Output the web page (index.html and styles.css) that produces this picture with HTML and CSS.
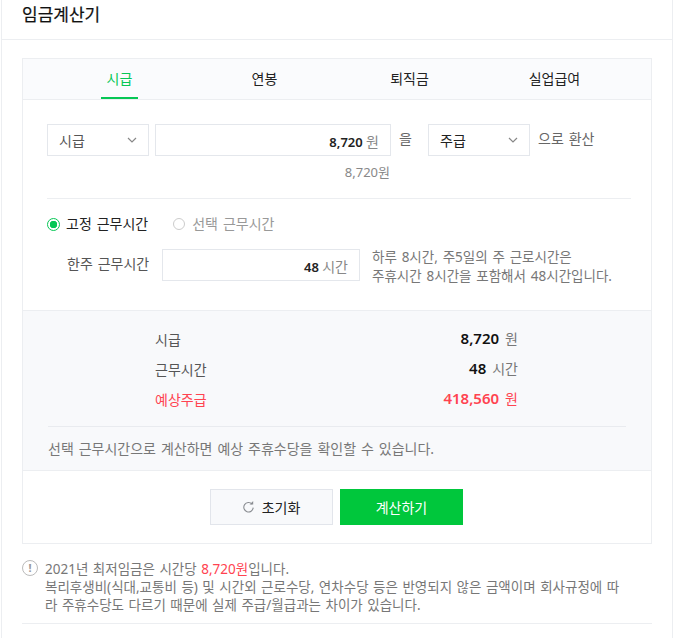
FILE: index.html
```html
<!DOCTYPE html>
<html lang="ko">
<head>
    <meta charset="UTF-8">
    <meta name="viewport" content="width=device-width, initial-scale=1.0">
    <title>임금계산기</title>
    <link rel="stylesheet" href="styles.css">
</head>
<body>
    <div class="wrap">
        <h1 class="title">임금계산기</h1>
        <div class="content">
            <div class="calc">
                <ul class="tabs">
                    <li class="tab on"><span>시급</span></li>
                    <li class="tab"><span>연봉</span></li>
                    <li class="tab"><span>퇴직금</span></li>
                    <li class="tab"><span>실업급여</span></li>
                </ul>

                <div class="form">
                    <div class="convert">
                        <div class="select">
                            <span>시급</span>
                            <svg class="arrow" width="10" height="6" viewBox="0 0 10 6"><path d="M1 1l4 4 4-4" fill="none" stroke="#888" stroke-width="1.2"/></svg>
                        </div>
                        <div class="input wide"><b>8,720</b> <span class="unit">원</span></div>
                        <span class="word eul">을</span>
                        <div class="select dark">
                            <span>주급</span>
                            <svg class="arrow" width="10" height="6" viewBox="0 0 10 6"><path d="M1 1l4 4 4-4" fill="none" stroke="#888" stroke-width="1.2"/></svg>
                        </div>
                        <span class="word">으로 환산</span>
                    </div>
                    <p class="korean">8,720원</p>

                    <div class="radios">
                        <label class="radio on"><i></i>고정 근무시간</label>
                        <label class="radio"><i></i>선택 근무시간</label>
                    </div>
                    <div class="hours">
                        <span class="hours-label">한주 근무시간</span>
                        <div class="input short"><b>48</b> <span class="unit">시간</span></div>
                        <p class="hours-note">하루 8시간, 주5일의 주 근로시간은<br>주휴시간 8시간을 포함해서 48시간입니다.</p>
                    </div>
                </div>

                <div class="result">
                    <dl class="result-row">
                        <dt>시급</dt>
                        <dd><b>8,720</b><span>원</span></dd>
                    </dl>
                    <dl class="result-row">
                        <dt>근무시간</dt>
                        <dd><b>48</b><span>시간</span></dd>
                    </dl>
                    <dl class="result-row total">
                        <dt>예상주급</dt>
                        <dd><b>418,560</b><span>원</span></dd>
                    </dl>
                    <p class="result-note">선택 근무시간으로 계산하면 예상 주휴수당을 확인할 수 있습니다.</p>
                </div>

                <div class="buttons">
                    <button class="btn reset">
                        <svg width="11" height="12" viewBox="0 0 11 12"><path d="M9 3.1A4.7 4.7 0 1 0 10.2 6.6" fill="none" stroke="#8a8d92" stroke-width="1.1"/><path d="M6.6 3.6h3.6V0z" fill="#8a8d92"/></svg>
                        초기화
                    </button>
                    <button class="btn submit">계산하기</button>
                </div>
            </div>

            <div class="notice">
                <span class="notice-icon">!</span>
                <p>2021년 최저임금은 시간당 <em>8,720원</em>입니다.<br>복리후생비(식대,교통비 등) 및 시간외 근로수당, 연차수당 등은 반영되지 않은 금액이며 회사규정에 따<br>라 주휴수당도 다르기 때문에 실제 주급/월급과는 차이가 있습니다.</p>
            </div>
        </div>
    </div>
</body>
</html>
```
FILE: styles.css
```css
* {
    box-sizing: border-box;
}
html, body {
    height: 638px;
    overflow: hidden;
}
body {
    margin: 0;
    background: #fff;
    color: #222;
    font-family: "Noto Sans", "Noto Sans CJK KR", sans-serif;
    font-size: 14px;
    word-spacing: 1.3px;
}
.wrap {
    width: 672px;
    height: 638px;
    margin-left: 1px;
    border-left: 1px solid #eceef1;
    border-right: 1px solid #eceef1;
}
.title {
    height: 40px;
    margin: 0;
    padding: 3px 0 0 20px;
    border-bottom: 1px solid #eceef1;
    font-size: 17px;
    font-weight: 400;
    line-height: 24px;
    color: #111;
    -webkit-text-stroke: 0.2px #111;
}
.content {
    padding: 18px 20px 0;
}
.calc {
    height: 486px;
    border: 1px solid #eceef1;
}
.tabs {
    display: flex;
    height: 41px;
    margin: 0;
    padding: 0 24px;
    list-style: none;
    background: #fafbfd;
    border-bottom: 1px solid #eceef1;
}
.tab {
    width: 145px;
    text-align: center;
    line-height: 40px;
}
.tab span {
    display: inline-block;
    height: 40px;
    padding: 0 5.5px;
}
.tab.on span {
    color: #06c755;
    border-bottom: 2px solid #06c755;
}
.form {
    height: 210px;
    padding: 24px 20px 0 24px;
}
.convert {
    display: flex;
    align-items: flex-start;
    height: 32px;
}
.select {
    display: flex;
    align-items: center;
    justify-content: space-between;
    width: 102px;
    height: 32px;
    padding: 0 11px 0 11px;
    border: 1px solid #e4e7ec;
    color: #555;
}
.select.dark {
    color: #222;
}
.input {
    height: 32px;
    padding-right: 11px;
    border: 1px solid #e4e7ec;
    text-align: right;
    line-height: 34px;
    font-size: 13px;
    word-spacing: 0;
}
.input b {
    font-weight: 600;
}
.input .unit {
    color: #888;
    font-size: 14px;
}
.input.wide {
    width: 236px;
    margin-left: 6px;
}
.input.short {
    width: 198px;
}
.word {
    color: #666;
    line-height: 30px;
}
.eul {
    width: 37px;
    padding-left: 8px;
}
.select + .word {
    margin-left: 8px;
}
.korean {
    width: 343px;
    margin: 6px 0 0;
    color: #888;
    font-size: 13px;
    text-align: right;
    line-height: 20px;
}
.radios {
    display: flex;
    gap: 25px;
    width: 584px;
    margin-top: 16px;
    padding-top: 15px;
    border-top: 1px solid #eceef1;
}
.radio {
    display: flex;
    align-items: center;
    color: #999;
    line-height: 20px;
}
.radio i {
    width: 12px;
    height: 12px;
    margin-right: 7px;
    border: 1px solid #ccc;
    border-radius: 50%;
}
.radio.on {
    color: #222;
}
.radio.on i {
    width: 13px;
    height: 13px;
    margin-right: 6px;
    border-color: #06c755;
    background: radial-gradient(circle, #06c755 0 3.5px, #fff 4px);
}
.hours {
    display: flex;
    align-items: flex-start;
    margin-top: 15px;
    padding-left: 20px;
}
.hours-label {
    width: 95px;
    color: #555;
    line-height: 30px;
}
.hours-note {
    margin: -1px 0 0 12px;
    color: #777;
    font-size: 13.5px;
    word-spacing: 1.3px;
    line-height: 19px;
    white-space: nowrap;
}
.result {
    height: 161px;
    padding-top: 14px;
    background: #f8f9fb;
    border-top: 1px solid #eceef1;
    border-bottom: 1px solid #eceef1;
}
.result-row {
    display: flex;
    justify-content: space-between;
    width: 363px;
    height: 30px;
    margin: 0 0 0 132px;
    line-height: 30px;
    color: #555;
}
.result-row dd {
    margin: -2px 0 0;
}
.result-row b {
    font-size: 15px;
    font-weight: 600;
    color: #111;
}
.result-row span {
    margin-left: 6px;
    color: #777;
}
.result-row.total dt,
.result-row.total b,
.result-row.total span {
    color: #ff4350;
}
.result-note {
    margin: 11px 25px 0 25px;
    padding-top: 12px;
    border-top: 1px solid #e9ebef;
    color: #777;
    line-height: 20px;
}
.buttons {
    display: flex;
    justify-content: center;
    gap: 7px;
    padding: 18px 1px 0 0;
}
.btn {
    display: flex;
    align-items: center;
    justify-content: center;
    width: 123px;
    height: 36px;
    font-family: inherit;
    font-size: 14px;
}
.reset {
    gap: 8px;
    background: #f8f9fb;
    border: 1px solid #e2e5eb;
    color: #222;
}
.submit {
    background: #00c73c;
    border: none;
    color: #fff;
}
.notice {
    display: flex;
    height: 80px;
    padding-top: 16px;
    border-bottom: 1px solid #eceef1;
}
.notice-icon {
    flex: none;
    width: 16px;
    height: 16px;
    margin: 0 7px 0 0;
    border: 1px solid #bbb;
    border-radius: 50%;
    color: #999;
    font-size: 11px;
    font-weight: 700;
    line-height: 14px;
    text-align: center;
}
.notice p {
    margin: 0;
    color: #777;
    font-size: 13.5px;
    word-spacing: 1px;
    line-height: 18px;
    white-space: nowrap;
}
.notice em {
    color: #ff4350;
    font-style: normal;
}
```
